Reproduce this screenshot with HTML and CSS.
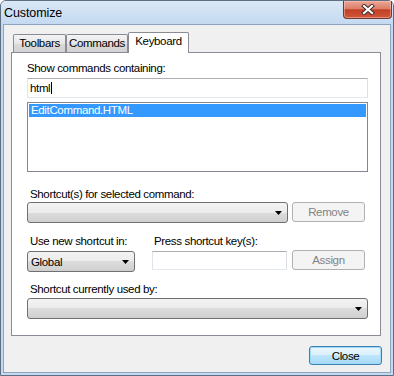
FILE: index.html
```html
<!DOCTYPE html>
<html>
<head>
<meta charset="utf-8">
<link rel="stylesheet" href="styles.css">
</head>
<body>
<div class="window">
  <div class="titlebar">
    <span class="title">Customize</span>
    <div class="close-btn">
      <svg width="14" height="11" viewBox="0 0 14 11"><path d="M3 2 L11 9 M11 2 L3 9" stroke="#3b2a2a" stroke-width="4" stroke-linecap="square" fill="none"/><path d="M3 2 L11 9 M11 2 L3 9" stroke="#ffffff" stroke-width="2.2" stroke-linecap="square" fill="none"/></svg>
    </div>
  </div>
  <div class="client">
    <div class="tabs">
      <div class="tab t-toolbars">Toolbars</div>
      <div class="tab t-commands">Commands</div>
      <div class="tab t-keyboard active">Keyboard</div>
    </div>
    <div class="panel">
      <div class="label l-first">Show commands containing:</div>
      <div class="textbox search"><span>html</span><span class="caret"></span></div>
      <div class="listbox">
        <div class="item selected">EditCommand.HTML</div>
      </div>

      <div class="label l-sec">Shortcut(s) for selected command:</div>
      <div class="row">
        <div class="combo c-shortcuts"><span></span><svg class="arrow" width="7" height="4" viewBox="0 0 7 4"><polygon points="0,0 7,0 3.5,4" fill="#000"/></svg></div>
        <div class="btn disabled">Remove</div>
      </div>

      <div class="row labels">
        <div class="label l-use">Use new shortcut in:</div>
        <div class="label l-press">Press shortcut key(s):</div>
      </div>
      <div class="row r-assign">
        <div class="combo c-global"><span>Global</span><svg class="arrow" width="7" height="4" viewBox="0 0 7 4"><polygon points="0,0 7,0 3.5,4" fill="#000"/></svg></div>
        <div class="textbox keys"></div>
        <div class="btn disabled">Assign</div>
      </div>

      <div class="label l-used">Shortcut currently used by:</div>
      <div class="combo c-used"><span></span><svg class="arrow" width="7" height="4" viewBox="0 0 7 4"><polygon points="0,0 7,0 3.5,4" fill="#000"/></svg></div>
    </div>
    <div class="footer">
      <div class="btn default">Close</div>
    </div>
  </div>
</div>
</body>
</html>
```
FILE: styles.css
```css
* { box-sizing: border-box; }
html, body { margin: 0; padding: 0; }
body {
  width: 394px;
  height: 376px;
  overflow: hidden;
  background: #ffffff;
  font-family: "Liberation Sans", Arial, sans-serif;
  font-size: 11.5px;
  letter-spacing: -0.35px;
  color: #000;
}
.window {
  width: 394px;
  height: 376px;
  border: 1px solid #5d6d82;
  border-radius: 6px 6px 0 0;
  background: #c4d8ef;
  padding: 0 2px 2px;
  display: flex;
  flex-direction: column;
}
.titlebar {
  height: 23px;
  margin: 0 -2px;
  padding-left: 3px;
  display: flex;
  align-items: flex-start;
  justify-content: space-between;
  background: linear-gradient(#dbe8f6, #c4d9f1);
  border-radius: 5px 5px 0 0;
}
.title {
  font-size: 12.5px;
  letter-spacing: -0.1px;
  line-height: 14px;
  padding-top: 5px;
}
.close-btn {
  width: 49px;
  height: 18px;
  margin-right: 1px;
  border: 1px solid #6e3a30;
  border-top: none;
  border-radius: 0 0 4px 4px;
  background: linear-gradient(#eba594, #dc806b 45%, #c23f25 52%, #d0573a 100%);
  box-shadow: inset 0 0 0 1px rgba(255, 210, 200, 0.45);
  display: flex;
  align-items: center;
  justify-content: center;
}
.client {
  flex: 1;
  border: 1px solid #8ea3bd;
  background: #f0f0f0;
  display: flex;
  flex-direction: column;
}
.tabs {
  height: 27px;
  display: flex;
  align-items: flex-end;
  margin-left: 7px;
  padding-left: 2px;
}
.tab {
  height: 18px;
  border: 1px solid #898c95;
  border-bottom: none;
  border-radius: 2px 2px 0 0;
  background: linear-gradient(#f4f4f4, #e6e6e6 50%, #dadada 50%, #d2d2d2);
  text-align: center;
  line-height: 15px;
  padding-top: 1px;
}
.t-toolbars { width: 53px; }
.t-commands { width: 62px; }
.t-keyboard { width: 61px; }
.tab.active {
  height: 21px;
  margin-bottom: -1px;
  background: #ffffff;
  position: relative;
  z-index: 1;
}
.panel {
  height: 284px;
  margin: 0 9px 0 7px;
  border: 1px solid #898c95;
  background: #ffffff;
  padding: 9px 12px 0 15px;
  display: flex;
  flex-direction: column;
}
.label {
  line-height: 13px;
  height: 13px;
  white-space: nowrap;
}
.l-sec, .l-used, .l-use { padding-left: 3px; }
.textbox {
  border: 1px solid;
  border-color: #abadb3 #dbdfe6 #e3e9ef #e2e3ea;
  background: #fff;
  display: flex;
  align-items: center;
}
.search {
  height: 20px;
  margin-top: 3px;
  padding-left: 2px;
}
.caret {
  width: 1px;
  height: 12px;
  margin-left: 1px;
  background: #000;
}
.listbox {
  height: 70px;
  margin-top: 4px;
  border: 1px solid #828790;
  padding: 1px;
}
.item {
  height: 13px;
  line-height: 13px;
  padding-left: 2px;
}
.item.selected {
  background: #3399ff;
  color: #fff;
}
.l-sec { margin-top: 16px; }
.row {
  display: flex;
  align-items: center;
}
.combo {
  height: 21px;
  border: 1px solid #707070;
  border-radius: 3px;
  background: linear-gradient(#f3f3f3, #ebebeb 50%, #dddddd 50%, #cfcfcf);
  display: flex;
  align-items: center;
  justify-content: space-between;
  padding: 0 5px 0 3px;
}
.arrow { margin-top: 1px; }
.c-shortcuts { width: 261px; margin-top: 1px; }
.btn {
  width: 73px;
  height: 20px;
  border: 1px solid #adb2b5;
  border-radius: 3px;
  background: #f4f4f4;
  display: flex;
  align-items: center;
  justify-content: center;
}
.btn.disabled { color: #838383; }
.row .btn { margin-left: 4px; }
.labels { margin-top: 12px; }
.l-use { width: 127px; }
.r-assign { margin-top: 3px; align-items: flex-start; }
.c-global { width: 108px; }
.keys {
  width: 135px;
  height: 19px;
  margin-left: 17px;
}
.r-assign .btn { margin-left: 5px; margin-top: -1px; }
.l-used { margin-top: 11px; }
.c-used { margin-top: 2px; }
.footer {
  display: flex;
  justify-content: flex-end;
  padding: 10px 8px 0 0;
}
.btn.default {
  height: 19px;
  border-color: #3c7fb1;
  background: linear-gradient(#eaf6fd, #d9f0fc 50%, #bee6fd 50%, #a7d9f5);
  box-shadow: inset 0 0 0 1px #9ddcf8;
}
```
